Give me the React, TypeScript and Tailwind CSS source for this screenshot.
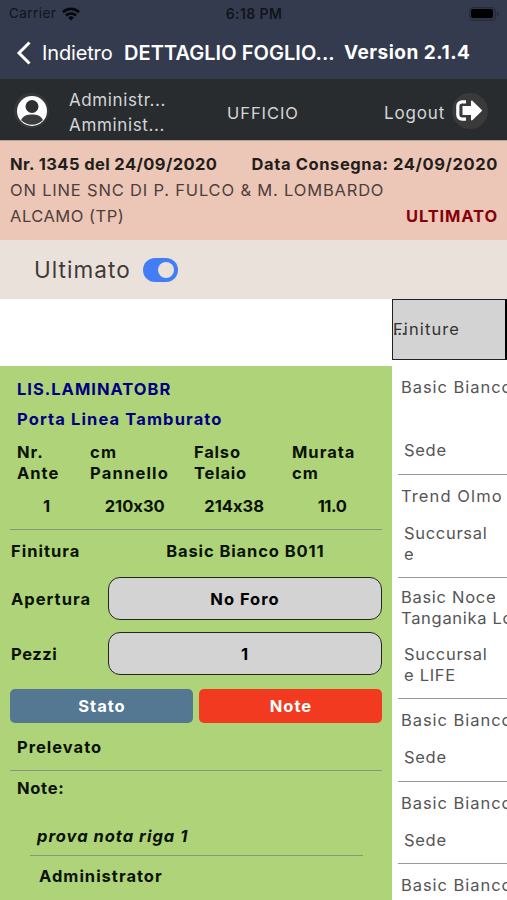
import React from 'react';

const finiture = [
  { name: ['Basic Bianco'], place: ['Sede'], row: 'h-[108px]', nameBox: 'pt-[10px] h-[73px] tracking-[0.95px]' },
  { name: ['Trend Olmo'], place: ['Succursal', 'e'], row: 'h-[103px]', nameBox: 'pt-[11px] h-[48px] tracking-[1.1px]' },
  { name: ['Basic Noce', 'Tanganika Lo'], place: ['Succursal', 'e LIFE'], row: 'h-[121px]', nameBox: 'pt-[9px] h-[66px] tracking-[0.7px]' },
  { name: ['Basic Bianco'], place: ['Sede'], row: 'h-[83px]', nameBox: 'pt-[11px] h-[48px] tracking-[0.95px]' },
  { name: ['Basic Bianco'], place: ['Sede'], row: 'h-[82px]', nameBox: 'pt-[11px] h-[48px] tracking-[0.95px]' },
  { name: ['Basic Bianco'], place: [], row: 'h-[83px]', nameBox: 'pt-[11px] h-[48px] tracking-[0.95px]' },
];

function StatusBar() {
  return (
    <div className="flex h-[27px] items-center justify-between pl-[9px] pr-[8px] text-[13.5px] text-[#11141b]">
      <div className="flex w-[150px] items-center gap-[6px]">
        <span className="tracking-[0.45px]">Carrier</span>
        <svg className="h-[14px] w-[18px]" viewBox="0 0 18 14" fill="none" stroke="#05070a" strokeWidth="2.6">
          <path d="M1 5.2a11.4 11.4 0 0 1 16 0" />
          <path d="M4 8.5a7.1 7.1 0 0 1 10 0" />
          <path d="M9 13.6 6.2 10.7a4 4 0 0 1 5.6 0Z" fill="#05070a" stroke="none" />
        </svg>
      </div>
      <span className="text-[14px] font-semibold tracking-[0.4px]">6:18 PM</span>
      <div className="flex w-[150px] items-center justify-end gap-px">
        <div className="h-[14px] w-[27px] rounded-[4px] border border-[#262b38] bg-[#30364a] p-[1.5px]">
          <div className="h-full rounded-[2px] bg-black" />
        </div>
        <div className="h-[4px] w-[2px] rounded-r bg-[#262b38]" />
      </div>
    </div>
  );
}

function NavBar() {
  return (
    <div className="flex h-[52px] items-center pl-[16px] text-white">
      <svg className="h-[24px] w-[16px]" viewBox="0 0 16 24" fill="none" stroke="currentColor" strokeWidth="3">
        <path d="M13.5 1.5 3 12l10.5 10.5" />
      </svg>
      <span className="ml-[10px] w-[82px] text-[20px] tracking-[-0.15px]">Indietro</span>
      <span className="w-[220px] whitespace-nowrap text-[20px] font-semibold tracking-[0.05px]">DETTAGLIO FOGLIO...</span>
      <span className="whitespace-nowrap text-[19px] font-bold tracking-[0.5px]">Version 2.1.4</span>
    </div>
  );
}

function UserBar() {
  return (
    <div className="flex h-[61px] items-center bg-[#282c2f] text-[17px] text-[#d4d5d6]">
      <div className="ml-[14px] mt-[2px] flex size-[35px] items-center justify-center rounded-full bg-[#36393c]">
        <svg className="size-[30px]" viewBox="0 0 30 30">
          <circle cx="15" cy="15" r="15" fill="#fff" />
          <circle cx="15" cy="10.5" r="6.5" fill="#2d3033" />
          <path d="M4 24c2.500-4.500 6-5.500 11-5.500s8.500 1 11 5.500c-5.500 6.300-16.500 6.300-22 0Z" fill="#3a3d40" />
        </svg>
      </div>
      <div className="ml-[20px] w-[158px] pt-[7px] leading-[25px]">
        <div className="tracking-[0.6px]">Administr...</div>
        <div className="tracking-[0.65px]">Amminist...</div>
      </div>
      <span className="w-[157px] pt-[8px] text-[16.5px] tracking-[0.95px]">UFFICIO</span>
      <span className="w-[68px] pt-[8px] tracking-[0.85px]">Logout</span>
      <div className="mt-[2px] flex size-[36px] items-center rounded-full bg-[#3a3a3b] pl-[4px]">
        <svg className="h-[21px] w-[26px]" viewBox="0 0 26 21" fill="#fff">
          <path d="M10 1.800H6a4.200 4.200 0 0 0-4.200 4.200v9a4.200 4.200 0 0 0 4.200 4.200H10" fill="none" stroke="#fff" strokeWidth="3.200" />
          <path d="M6.500 6H15V1.500c0-1 .9-1.300 1.600-.6l9 8.800c.5.500.5 1.100 0 1.600l-9 8.800c-.7.700-1.600.4-1.600-.6V15H6.500Z" />
        </svg>
      </div>
    </div>
  );
}

function OrderInfo() {
  return (
    <div className="h-[100px] border-t border-[#b5a09a] bg-[#ecc6b6] px-[10px] pt-[10px] text-[16.5px] leading-[26px] text-[#4d403b]">
      <div className="flex justify-between whitespace-nowrap font-bold text-[#231e1b]">
        <span className="tracking-[0.4px]">Nr. 1345 del 24/09/2020</span>
        <span className="-mr-px tracking-[0.6px]">Data Consegna: 24/09/2020</span>
      </div>
      <div className="whitespace-nowrap tracking-[0.82px]">ON LINE SNC DI P. FULCO &amp; M. LOMBARDO</div>
      <div className="flex justify-between">
        <span className="tracking-[0.5px]">ALCAMO (TP)</span>
        <span className="-mr-px font-bold tracking-[0.88px] text-[#850009]">ULTIMATO</span>
      </div>
    </div>
  );
}

function UltimatoToggle() {
  return (
    <div className="flex h-[59px] items-center bg-[#ebe1db] pl-[34px] text-[#403b39]">
      <span className="w-[109px] text-[22.5px] tracking-[1.05px]">Ultimato</span>
      <div className="flex h-[24px] w-[35px] items-center justify-end rounded-full bg-[#427df5] pr-[4px]">
        <div className="size-[16px] rounded-full bg-[#ebe1db]" />
      </div>
    </div>
  );
}

function DoorCard() {
  return (
    <div className="h-[534px] bg-[#afd378] px-[10px] pt-[8px] text-[16.5px] font-bold leading-[20.5px] tracking-[1px] text-[#0b1206]">
      <div className="pl-[7px] leading-[30px] text-[#000080]">
        <div>LIS.LAMINATOBR</div>
        <div className="tracking-[1.12px]">Porta Linea Tamburato</div>
      </div>
      <div className="mt-[8px] grid h-[41px] grid-cols-[73px_104px_98px_80px] pl-[7px]">
        <span>Nr.<br />Ante</span>
        <span className="tracking-[1.2px]">cm<br />Pannello</span>
        <span className="tracking-[0.8px]">Falso<br />Telaio</span>
        <span>Murata<br />cm</span>
      </div>
      <div className="flex h-[47px] w-[372px] items-center border-b border-[#87967a] text-center tracking-[0px] [font-feature-settings:'calt'_0]">
        <span className="w-[74px]">1</span>
        <span className="w-[104px]">210x30</span>
        <span className="w-[97px]">214x38</span>
        <span className="w-[101px] tracking-[-0.4px]">11.0</span>
      </div>
      <div className="flex h-[43px] items-center">
        <span className="w-[98px] pl-px">Finitura</span>
        <span className="w-[275px] pl-px text-center tracking-[0.9px]">Basic Bianco B011</span>
      </div>
      <div className="mt-[4px] flex h-[43px] items-center">
        <span className="w-[98px] pl-px pt-px">Apertura</span>
        <span className="flex h-full w-[274px] items-center justify-center rounded-[12px] border border-[#22271e] bg-[#d3d3d3] pt-px text-black">No Foro</span>
      </div>
      <div className="mt-[12px] flex h-[43px] items-center">
        <span className="w-[98px] pl-px pt-px tracking-[0.6px]">Pezzi</span>
        <span className="flex h-full w-[274px] items-center justify-center rounded-[12px] border border-[#22271e] bg-[#d3d3d3] pt-px text-black">1</span>
      </div>
      <div className="mt-[14px] flex h-[34px] gap-[6px] text-white">
        <button className="w-[183px] rounded-[5px] bg-[#547892] pl-px">Stato</button>
        <button className="w-[183px] rounded-[5px] bg-[#f23a20] pl-px">Note</button>
      </div>
      <div className="flex h-[48px] w-[372px] items-center border-b border-[#87967a] pl-[7px] pt-px">Prelevato</div>
      <div className="h-[48px] pl-[7px] pt-[7px] tracking-[0.7px]">Note:</div>
      <div className="ml-[20px] flex h-[37px] w-[333px] items-center border-b border-[#87967a] pb-[2px] pl-[7px] italic">prova nota riga 1</div>
      <div className="pl-[29px] pt-[10px]">Administrator</div>
    </div>
  );
}

function FinitureList() {
  return (
    <div className="w-[115px] overflow-hidden whitespace-nowrap text-[16.5px] leading-[20.5px] text-[#555]">
      <div className="relative flex h-[61px] items-center border border-r-2 border-[#222] border-r-black bg-[#d3d3d3] text-[#333]">
        <span className="tracking-[1.1px]">Finiture</span>
        <span className="absolute left-0 top-[19px] tracking-[-0.5px] text-[#333]">...</span>
      </div>
      <div className="mt-[7px] pl-[6px]">
        {finiture.map((item, i) => (
          <div key={i} className={`${item.row} border-b border-[#999]`}>
            <div className={`${item.nameBox} pl-[3px]`}>
              {item.name.map((line) => <div key={line}>{line}</div>)}
            </div>
            <div className="pl-[6px] tracking-[0.7px]">
              {item.place.map((line) => <div key={line}>{line}</div>)}
            </div>
          </div>
        ))}
      </div>
    </div>
  );
}

export default function App() {
  return (
    <div className="h-[900px] w-[507px] overflow-hidden bg-white font-[Inter,sans-serif]">
      <header className="bg-[#343b4e]">
        <StatusBar />
        <NavBar />
      </header>
      <UserBar />
      <OrderInfo />
      <UltimatoToggle />
      <main className="flex">
        <div className="w-[392px] pt-[67px]">
          <DoorCard />
        </div>
        <FinitureList />
      </main>
    </div>
  );
}
